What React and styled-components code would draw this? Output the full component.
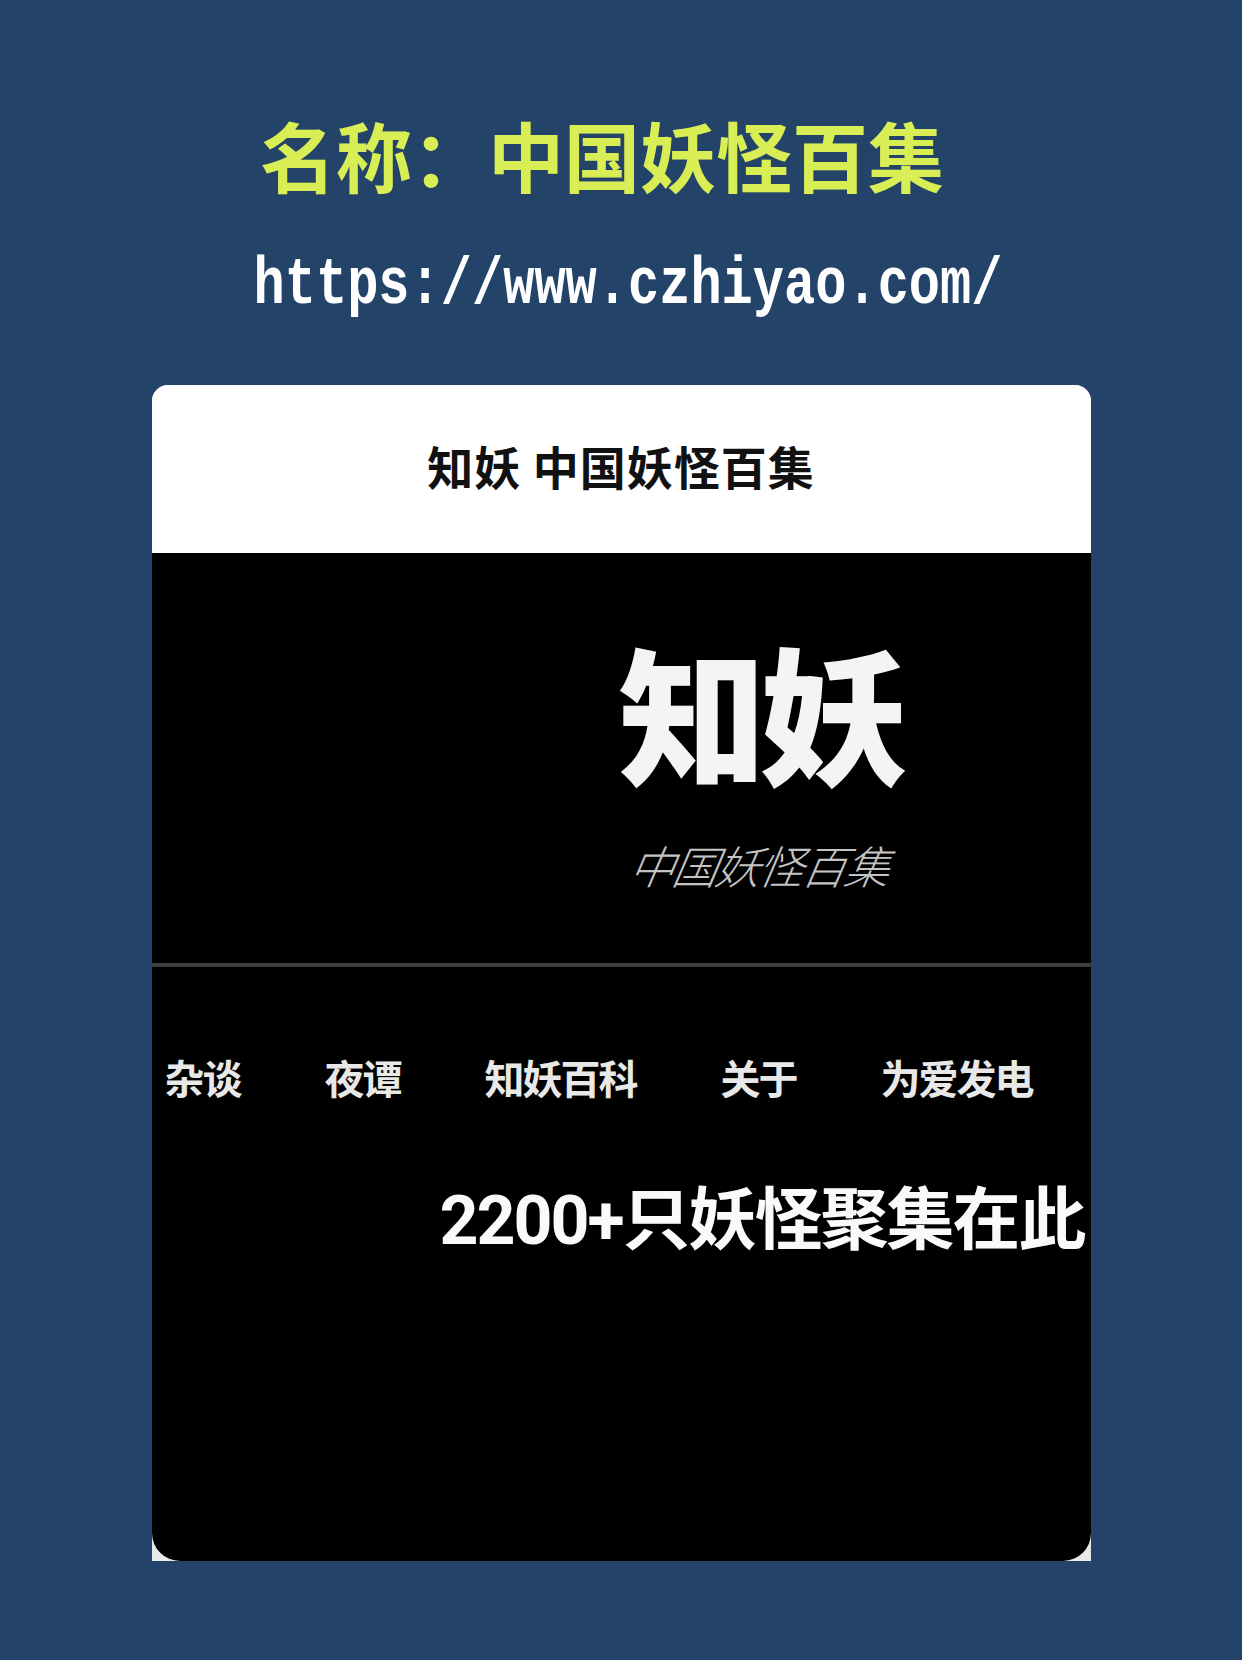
import React from "react";
import styled, { createGlobalStyle } from "styled-components";

const GlobalStyle = createGlobalStyle`
  html, body {
    margin: 0;
    padding: 0;
    background: #234369;
  }
  body {
    font-family: "Noto Sans CJK SC", "Noto Sans", sans-serif;
  }
`;

const Page = styled.div`
  width: 1242px;
  min-height: 1660px;
  background: #234369;
  display: flex;
  flex-direction: column;
  align-items: center;
  padding-top: 116px;
  box-sizing: border-box;
`;

const Title = styled.h1`
  margin: 0 0 0 -38px;
  font-family: "Noto Sans CJK SC", sans-serif;
  font-weight: 700;
  font-size: 76px;
  line-height: 1;
  color: #d9ee54;
`;

const Url = styled.div`
  margin-top: 68px;
  margin-left: 14px;
  font-family: "Liberation Mono", "DejaVu Sans Mono", monospace;
  font-weight: 700;
  font-size: 52px;
  line-height: 1;
  color: #ffffff;
  transform: scaleY(1.3);
`;

const Card = styled.div`
  margin-top: 73px;
  width: 939px;
  height: 1176px;
  background: #e9e9e9;
  display: flex;
  flex-direction: column;
  border-radius: 16px 16px 0 0;
  overflow: hidden;
`;

const Header = styled.div`
  height: 168px;
  padding-bottom: 8px;
  box-sizing: border-box;
  background: #ffffff;
  display: flex;
  align-items: center;
  justify-content: center;
  font-weight: 700;
  font-size: 46px;
  letter-spacing: 1px;
  color: #111;
`;

const Screen = styled.div`
  flex: 1;
  background: #000;
  border-radius: 0 0 28px 28px;
  display: flex;
  flex-direction: column;
  overflow: hidden;
`;

const Hero = styled.div`
  height: 410px;
  display: flex;
  flex-direction: column;
  padding-left: 467px;
  padding-top: 83px;
  box-sizing: border-box;
`;

const Logo = styled.div`
  font-weight: 900;
  font-size: 148px;
  line-height: 1;
  color: #f4f4f4;
  letter-spacing: -7px;
`;

const Subtitle = styled.div`
  margin-top: 58px;
  margin-left: 12px;
  font-weight: 300;
  font-style: italic;
  font-size: 45px;
  line-height: 1;
  color: #c4c4c4;
  letter-spacing: -2px;
  transform: skewX(-10deg);
`;

const Divider = styled.div`
  height: 4px;
  background: #3e3e3e;
`;

const Nav = styled.nav`
  display: flex;
  gap: 84px;
  padding-left: 13px;
  margin-top: 90px;
`;

const NavItem = styled.span`
  font-weight: 700;
  font-size: 40px;
  line-height: 1;
  color: #e8e8e8;
  letter-spacing: -2px;
`;

const Slogan = styled.div`
  margin-top: 90px;
  padding-left: 288px;
  font-family: "Roboto", "Noto Sans CJK SC", sans-serif;
  font-weight: 700;
  font-size: 68px;
  line-height: 1;
  color: #fafafa;
  white-space: nowrap;
  letter-spacing: -2px;
`;

const navItems = ["杂谈", "夜谭", "知妖百科", "关于", "为爱发电"];

export default function App() {
  return (
    <>
      <GlobalStyle />
      <Page>
        <Title>名称：中国妖怪百集</Title>
        <Url>https://www.czhiyao.com/</Url>
        <Card>
          <Header>知妖 中国妖怪百集</Header>
          <Screen>
            <Hero>
              <Logo>知妖</Logo>
              <Subtitle>中国妖怪百集</Subtitle>
            </Hero>
            <Divider />
            <Nav>
              {navItems.map((item) => (
                <NavItem key={item}>{item}</NavItem>
              ))}
            </Nav>
            <Slogan>2200+只妖怪聚集在此</Slogan>
          </Screen>
        </Card>
      </Page>
    </>
  );
}
